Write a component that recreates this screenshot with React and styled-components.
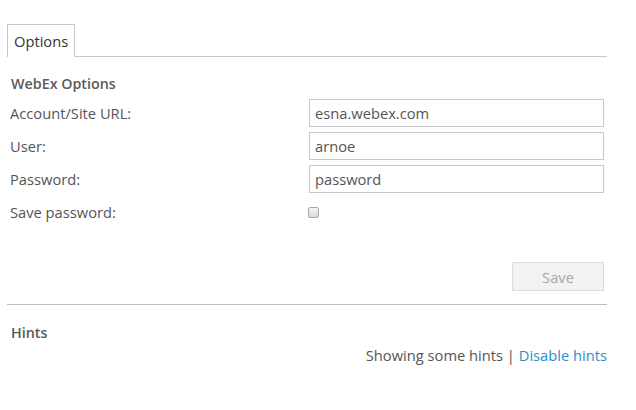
import React from 'react'
import styled, { createGlobalStyle } from 'styled-components'

const GlobalStyle = createGlobalStyle`
  body {
    margin: 0;
    background: #fff;
    font-family: 'Open Sans', 'DejaVu Sans', sans-serif;
    font-size: 14.7px;
    color: #555;
  }
`

const Page = styled.div`
  width: 600px;
  margin-left: 7px;
  padding-top: 24px;
`

const TabBar = styled.div`
  display: flex;
  border-bottom: 1px solid #c8c8c8;
`

const Tab = styled.div`
  height: 32px;
  line-height: 32px;
  padding: 0 6px;
  border: 1px solid #c8c8c8;
  border-bottom: none;
  background: #fff;
  margin-bottom: -1px;
  color: #333;
  font-size: 14.7px;
`

const Section = styled.div`
  padding: 17px 3px 0;
`

const Heading = styled.div`
  font-size: 14.3px;
  font-weight: 600;
  line-height: 20px;
  padding-left: 1px;
  color: #5a5a5a;
  margin-bottom: 5px;
`

const FormGrid = styled.div`
  display: grid;
  grid-template-columns: 299px 295px;
  grid-auto-rows: 28px;
  row-gap: 5px;
  align-items: center;
`

const Label = styled.label`
  font-size: 14.7px;
  color: #555;
`

const Input = styled.input`
  box-sizing: border-box;
  width: 100%;
  height: 28px;
  border: 1px solid #c8c8c8;
  padding: 0 5px;
  font-family: inherit;
  font-size: 14.7px;
  color: #555;
  outline: none;
`

const Check = styled.input`
  appearance: none;
  width: 11px;
  height: 11px;
  margin: 0 0 0 -1px;
  border: 1px solid #a8a8a8;
  border-radius: 2px;
  background: linear-gradient(#f4f4f4, #d8d8d8);
`

const ButtonRow = styled.div`
  display: flex;
  justify-content: flex-end;
  margin-top: 36px;
`

const SaveButton = styled.button`
  width: 92px;
  height: 29px;
  border: 1px solid #dcdcdc;
  background: #f2f2f2;
  color: #a8a8a8;
  font-family: inherit;
  font-size: 14.7px;
  padding: 0;
`

const Divider = styled.hr`
  border: none;
  border-top: 1px solid #bdbdbd;
  margin: 13px 0 0;
`

const HintsTitle = styled.div`
  font-size: 14.3px;
  font-weight: 600;
  line-height: 20px;
  padding: 18px 0 0 4px;
  color: #5a5a5a;
`

const HintLine = styled.div`
  text-align: right;
  line-height: 20px;
  margin-top: 2px;
  font-size: 14.7px;
  color: #555;
`

const HintLink = styled.a`
  color: #2f8dc8;
  text-decoration: none;
`

export default function App () {
  return (
    <Page>
      <GlobalStyle />
      <TabBar>
        <Tab>Options</Tab>
      </TabBar>
      <Section>
        <Heading>WebEx Options</Heading>
        <FormGrid>
          <Label>Account/Site URL:</Label>
          <Input defaultValue='esna.webex.com' />
          <Label>User:</Label>
          <Input defaultValue='arnoe' />
          <Label>Password:</Label>
          <Input defaultValue='password' />
          <Label>Save password:</Label>
          <div>
            <Check type='checkbox' />
          </div>
        </FormGrid>
        <ButtonRow>
          <SaveButton disabled>Save</SaveButton>
        </ButtonRow>
      </Section>
      <Divider />
      <HintsTitle>Hints</HintsTitle>
      <HintLine>
        Showing some hints | <HintLink href='#'>Disable hints</HintLink>
      </HintLine>
    </Page>
  )
}
